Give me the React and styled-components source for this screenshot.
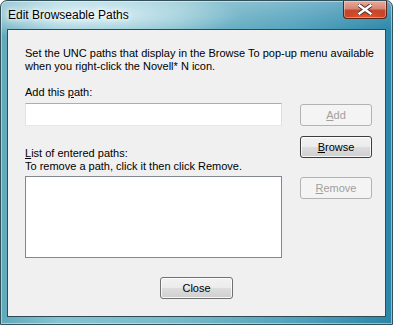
import React from "react";
import styled, { createGlobalStyle } from "styled-components";

const Global = createGlobalStyle`
  html, body { margin: 0; padding: 0; background: #ffffff; }
  body { font-family: "Liberation Sans", Arial, sans-serif; }
  * { box-sizing: border-box; }
`;

const Window = styled.div`
  width: 393px;
  height: 325px;
  border: 1px solid #33505a;
  border-radius: 7px 7px 0 0;
  display: flex;
  flex-direction: column;
  padding: 0 6px 7px 6px;
  position: relative;
  overflow: hidden;
  background:
    radial-gradient(ellipse 150px 26px at 90px 14px, rgba(235, 248, 252, 0.85), rgba(235, 248, 252, 0) 100%),
    linear-gradient(to bottom, rgba(255,255,255,0.25) 0px, rgba(255,255,255,0) 30px),
    linear-gradient(to right, #5fa9bb 0%, #86c3d1 15%, #78b9c9 45%, #52a2bc 75%, #2a86a8 100%);
  box-shadow: inset 0 0 0 1px rgba(255,255,255,0.45);
`;

const TitleBar = styled.div`
  height: 28px;
  display: flex;
  align-items: flex-start;
  justify-content: space-between;
  flex-shrink: 0;
`;

const Title = styled.span`
  font-family: "Liberation Sans", Arial, sans-serif;
  font-size: 12px;
  color: #000;
  padding: 7px 0 0 1px;
  text-shadow: 0 0 6px #ffffff, 0 0 10px #ffffff, 0 0 3px rgba(255,255,255,0.9);
`;

const CloseCaption = styled.div`
  width: 44px;
  height: 18px;
  margin-right: -1px;
  border: 1px solid #5a2418;
  border-top: none;
  border-radius: 0 0 4px 4px;
  display: flex;
  align-items: center;
  justify-content: center;
  background:
    radial-gradient(ellipse 26px 8px at 50% 100%, rgba(255, 90, 40, 0.9), rgba(255,90,40,0) 100%),
    linear-gradient(to bottom, #e8aa9c 0%, #d88572 45%, #c24a30 55%, #b83a22 100%);
  box-shadow: inset 0 0 0 1px rgba(255,255,255,0.35);
`;

const Client = styled.div`
  flex: 1;
  background: #f0f0f0;
  border: 1px solid #2e4b55;
  padding: 17px 12px 0 17px;
  display: flex;
  flex-direction: column;
  font-family: "Liberation Sans", Arial, sans-serif;
  font-size: 11px;
  color: #000;
`;

const Text = styled.div`
  line-height: 13px;
  white-space: nowrap;
  margin-top: ${(p) => p.$mt || 0}px;
`;

const Columns = styled.div`
  display: grid;
  grid-template-columns: 257px 72px;
  column-gap: 18px;
  margin-top: 13px;
`;

const LeftCol = styled.div`
  display: flex;
  flex-direction: column;
`;

const RightCol = styled.div`
  display: flex;
  flex-direction: column;
  padding-top: 18px;
`;

const Input = styled.div`
  height: 23px;
  margin-top: 4px;
  background: #fff;
  border: 1px solid #abadb3;
  border-right-color: #dbdfe6;
  border-bottom-color: #e3e9ef;
  border-left-color: #e2e3ea;
  border-top-color: #abadb3;
`;

const ListBox = styled.div`
  height: 82px;
  margin-top: 3px;
  background: #fff;
  border: 1px solid #828790;
`;

const Button = styled.div`
  height: 22px;
  width: ${(p) => p.$w || 72}px;
  margin-top: ${(p) => p.$mt || 0}px;
  border-radius: 3px;
  display: flex;
  align-items: center;
  justify-content: center;
  font-size: 11px;
  line-height: 13px;
  color: ${(p) => (p.$disabled ? "#a0a0a0" : "#000")};
  border: 1px solid ${(p) => (p.$disabled ? "#b5b2b5" : p.$default ? "#3c3c3c" : "#707070")};
  background: ${(p) =>
    p.$disabled
      ? "#f4f4f4"
      : "linear-gradient(to bottom, #f2f2f2 0%, #ebebeb 50%, #dddddd 51%, #cfcfcf 100%)"};
  box-shadow: inset 0 0 0 1px ${(p) => (p.$disabled ? "#f4f4f4" : "rgba(255,255,255,0.8)")};
`;

const Footer = styled.div`
  display: flex;
  justify-content: center;
  margin-top: 19px;
  padding-right: 5px;
`;

export default function App() {
  return (
    <>
      <Global />
      <Window>
        <TitleBar>
          <Title>Edit Browseable Paths</Title>
          <CloseCaption>
            <svg width="14" height="11" viewBox="0 0 14 11">
              <path
                d="M1.5 1.5 L12.5 9.5 M12.5 1.5 L1.5 9.5"
                stroke="#4a2a24"
                strokeWidth="4.2"
                strokeLinecap="square"
              />
              <path
                d="M1.5 1.5 L12.5 9.5 M12.5 1.5 L1.5 9.5"
                stroke="#ffffff"
                strokeWidth="2.4"
                strokeLinecap="square"
              />
            </svg>
          </CloseCaption>
        </TitleBar>
        <Client>
          <Text>Set the UNC paths that display in the Browse To pop-up menu available</Text>
          <Text>when you right-click the Novell* N icon.</Text>
          <Columns>
            <LeftCol>
              <Text>Add this <u>p</u>ath:</Text>
              <Input />
              <Text $mt={21}><u>L</u>ist of entered paths:</Text>
              <Text>To remove a path, click it then click Remove.</Text>
              <ListBox />
            </LeftCol>
            <RightCol>
              <Button $disabled><u>A</u>dd</Button>
              <Button $mt={10} $default><u>B</u>rowse</Button>
              <Button $mt={19} $disabled><u>R</u>emove</Button>
            </RightCol>
          </Columns>
          <Footer>
            <Button $w={73}>Close</Button>
          </Footer>
        </Client>
      </Window>
    </>
  );
}
